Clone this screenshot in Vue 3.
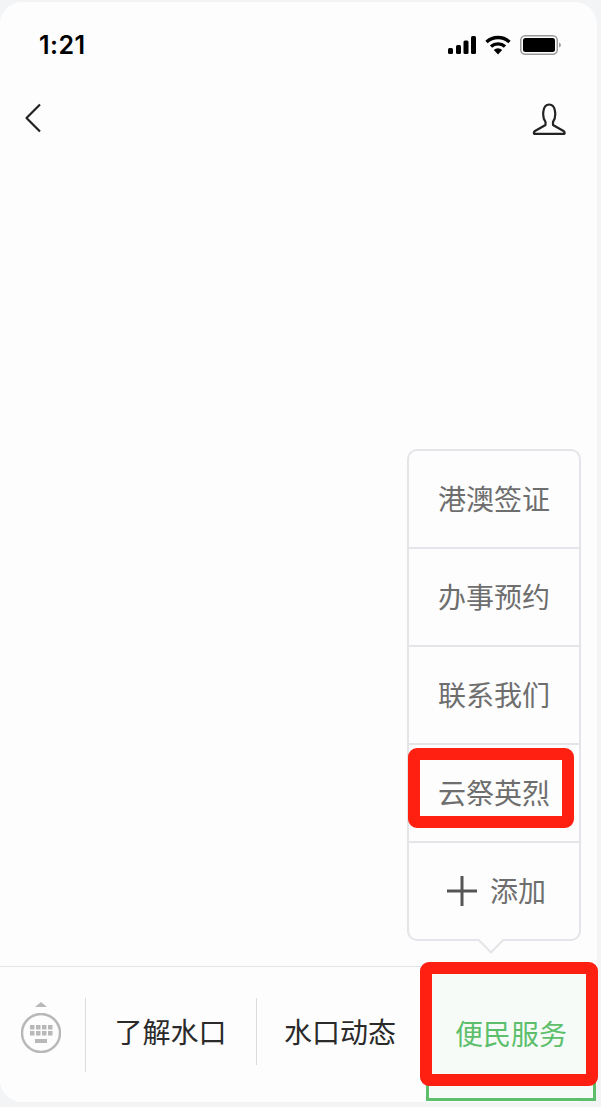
<script setup>
const menu = ['港澳签证', '办事预约', '联系我们', '云祭英烈']
const keys = [0, 1, 2, 3, 4, 5, 6, 7]
</script>

<template>
  <div class="phone">
    <div class="status">
      <span class="time">1:21</span>
      <div class="status-icons">
        <svg width="28" height="18" viewBox="0 0 28 18" class="signal">
          <rect x="0" y="12" width="5" height="6" rx="1.5" />
          <rect x="8" y="9" width="5" height="9" rx="1.5" />
          <rect x="15.500" y="4.500" width="5" height="13.500" rx="1.500" />
          <rect x="23" y="0" width="5" height="18" rx="1.500" />
        </svg>
        <svg width="26" height="20" viewBox="0 0 26 20" class="wifi">
          <path d="M1.500 7 A17 17 0 0 1 24.500 7" />
          <path d="M6 11.500 A10.500 10.500 0 0 1 20 11.500" />
          <path class="wifi-dot" d="M13 19.500 L8.800 15 A6 6 0 0 1 17.200 15 Z" />
        </svg>
        <svg width="42" height="20" viewBox="0 0 42 20" class="battery">
          <rect class="battery-shell" x="0.750" y="0.750" width="36.500" height="18.500" rx="4.500" />
          <rect class="battery-fill" x="3" y="3" width="32" height="14" rx="2.500" />
          <path class="battery-cap" d="M39 7.500 Q41 8.500 41 10 Q41 11.500 39 12.500 Z" />
        </svg>
      </div>
    </div>

    <div class="nav">
      <svg width="18" height="30" viewBox="0 0 18 30" class="icon-line">
        <path d="M16 1.500 L2.500 15 L16 28.500" />
      </svg>
      <svg width="34" height="32" viewBox="0 0 34 32" class="icon-line">
        <path d="M13.500 19 C10 14.500 10 1.500 17.200 1.500 C24.400 1.500 24.400 14.500 21 19 L21 22 L31.500 28 Q33 29 32.500 30.800 H2 Q1.500 29 3 28 L13.500 22 Z" />
      </svg>
    </div>

    <main class="content"></main>

    <div class="popup">
      <div v-for="(item, index) in menu" :key="item" class="popup-row">
        <span>{{ item }}</span>
        <div v-if="index === 3" class="mark mark-row"></div>
      </div>
      <div class="popup-row popup-add">
        <svg width="32" height="32" viewBox="0 0 32 32" class="plus">
          <path d="M1 16 H31 M16 1 V31" />
        </svg>
        <span>添加</span>
      </div>
      <div class="popup-arrow"></div>
    </div>

    <div class="tabbar">
      <div class="keyboard">
        <div class="keyboard-arrow"></div>
        <svg width="40" height="40" viewBox="0 0 40 40">
          <circle cx="20" cy="20" r="19" class="keyboard-ring" />
          <rect v-for="k in keys" :key="k" class="keyboard-key" :x="9 + (k % 4) * 6" :y="12 + Math.floor(k / 4) * 6" width="4.500" height="4.500" />
          <rect class="keyboard-key" x="14" y="26" width="12" height="4" />
        </svg>
      </div>
      <div class="tab tab-first"><span>了解水口</span></div>
      <div class="tab tab-second"><span>水口动态</span></div>
      <div class="tab tab-active">
        <span>便民服务</span>
        <div class="mark mark-tab"></div>
      </div>
    </div>
  </div>
</template>

<style>
html, body { margin: 0; background: #f3f4f6; }
</style>

<style scoped>
.phone {
  position: relative;
  box-sizing: border-box;
  width: 597px;
  height: 1100px;
  margin-top: 2px;
  border-radius: 22px;
  background: #fdfdfd;
  display: flex;
  flex-direction: column;
  font-family: "Noto Sans CJK SC", "Noto Sans", sans-serif;
}
.status {
  height: 84px;
  flex: none;
  box-sizing: border-box;
  padding: 25px 35px 0 39px;
  display: flex;
  justify-content: space-between;
  align-items: flex-start;
}
.time {
  font-family: Inter, "Liberation Sans", sans-serif;
  font-size: 25px;
  line-height: 36px;
  font-weight: 600;
  letter-spacing: 0.5px;
  color: #000;
}
.status-icons {
  display: flex;
  align-items: center;
  gap: 9px;
  padding-top: 8px;
}
.signal rect { fill: #000; }
.wifi path { fill: none; stroke: #000; stroke-width: 3.400; }
.wifi .wifi-dot { fill: #000; stroke: none; }
.battery-shell { fill: none; stroke: #9a9a9a; stroke-width: 1.500; }
.battery-fill { fill: #000; }
.battery-cap { fill: #9a9a9a; }
.nav {
  height: 70px;
  flex: none;
  box-sizing: border-box;
  padding: 17px 31px 0 24px;
  display: flex;
  justify-content: space-between;
  align-items: flex-start;
}
.icon-line path {
  fill: none;
  stroke: #222;
  stroke-width: 2.200;
  stroke-linejoin: round;
}
.content { flex: 1; }
.popup {
  position: absolute;
  left: 407px;
  top: 447px;
  width: 174px;
  height: 492px;
  box-sizing: border-box;
  border: 2px solid #e4e5e9;
  border-radius: 10px;
  background: #fdfdfd;
  display: flex;
  flex-direction: column;
}
.popup-row {
  position: relative;
  height: 98px;
  flex: none;
  box-sizing: border-box;
  border-bottom: 2px solid #e4e5e9;
  display: flex;
  align-items: center;
  justify-content: center;
  font-size: 28px;
  color: #6e6e6e;
}
.popup-add {
  border-bottom: 0;
  height: 96px;
  gap: 12px;
  padding-left: 4px;
}
.popup-row span { position: relative; top: -1px; }
.plus path { fill: none; stroke: #555; stroke-width: 3; }
.popup-arrow {
  position: absolute;
  left: 73px;
  bottom: -11px;
  width: 16px;
  height: 16px;
  background: #fdfdfd;
  border-right: 2px solid #e4e5e9;
  border-bottom: 2px solid #e4e5e9;
  transform: rotate(45deg);
}
.tabbar {
  height: 136px;
  flex: none;
  box-sizing: border-box;
  border-top: 1px solid #e4e5e9;
  border-radius: 0 0 22px 22px;
  display: flex;
  align-items: flex-start;
  background: #fdfdfd;
  font-size: 28px;
  color: #2a2a2a;
}
.keyboard {
  width: 86px;
  flex: none;
  box-sizing: border-box;
  display: flex;
  flex-direction: column;
  align-items: center;
  gap: 6px;
  border-right: 1px solid #dcdcdc;
  margin-top: 31px;
  height: 74px;
  padding-top: 4px;
  padding-right: 3px;
}
.keyboard-arrow {
  width: 0;
  height: 0;
  border-left: 6px solid transparent;
  border-right: 6px solid transparent;
  border-bottom: 5px solid #b8b8b8;
  flex: none;
}
.keyboard svg { flex: none; }
.keyboard-ring { fill: none; stroke: #b8b8b8; stroke-width: 2.500; }
.keyboard-key { fill: #b8b8b8; }
.tab {
  display: flex;
  align-items: center;
  justify-content: center;
  flex: none;
  box-sizing: border-box;
}
.tab-first {
  width: 171px;
  height: 67px;
  margin-top: 31px;
  padding-right: 1px;
  border-right: 1px solid #dcdcdc;
}
.tab-first span, .tab-second span { position: relative; top: -1px; }
.tab-second {
  width: 166px;
  height: 67px;
  margin-top: 31px;
}
.tab-active {
  position: relative;
  width: 170px;
  height: 134px;
  margin-left: 3px;
  border: 3px solid #5dbf6c;
  border-top: 0;
  background: #f6fbf8;
  color: #5dbf6c;
}
.mark {
  position: absolute;
  box-sizing: border-box;
  border: 12px solid #ff2012;
  border-radius: 9px;
}
.mark-row {
  left: -1px;
  top: 3px;
  width: 166px;
  height: 80px;
}
.mark-tab {
  left: -9px;
  top: -5px;
  width: 178px;
  height: 124px;
}
</style>
